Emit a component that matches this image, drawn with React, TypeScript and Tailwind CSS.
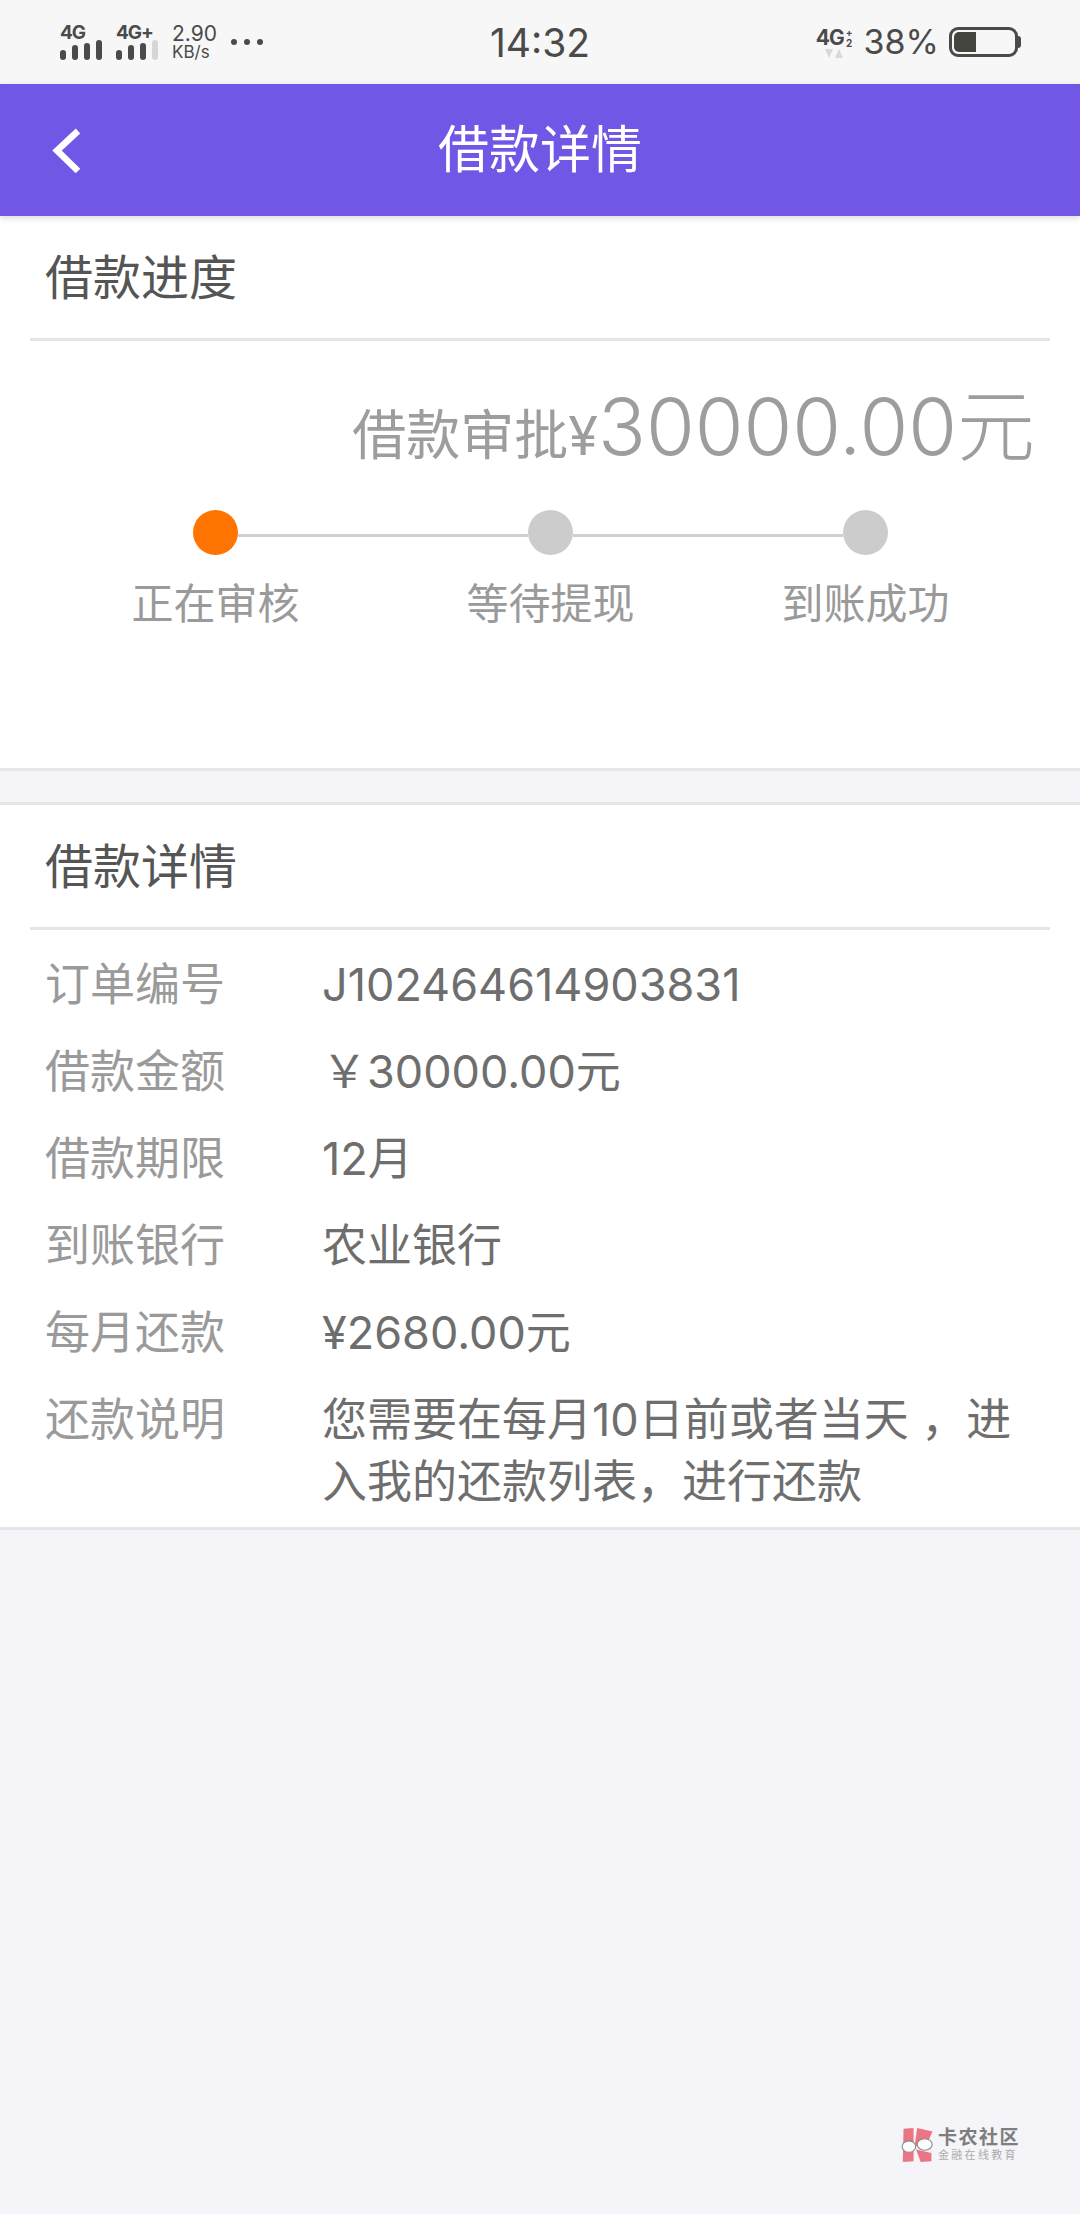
const base = "font-['Inter','Noto_Sans_CJK_SC',sans-serif]";

function SignalBars({ dim }: { dim?: boolean }) {
  const heights = ['h-[10px]', 'h-[15px]', 'h-[17px]', 'h-[20px]'];
  return (
    <div className="flex items-end gap-[6px]">
      {heights.map((h, i) => (
        <div
          key={h}
          className={`w-[6px] rounded-full ${h} ${dim && i === 3 ? 'bg-[#d6d6d6]' : 'bg-[#4a4a4a]'}`}
        />
      ))}
    </div>
  );
}

function Signal({ label, dim }: { label: string; dim?: boolean }) {
  return (
    <div className="w-[44px] flex flex-col items-start">
      <span className="text-[19px] leading-[16px] font-bold whitespace-nowrap tracking-[-1px] text-[#4a4a4a]">{label}</span>
      <div className="mt-[-1px]">
        <SignalBars dim={dim} />
      </div>
    </div>
  );
}

function StatusBar() {
  return (
    <div className="h-[84px] bg-[#f7f7f7] flex items-center justify-between text-[#4a4a4a]">
      <div className="w-[400px] flex items-center pl-[60px] gap-[12px]">
        <Signal label="4G" />
        <Signal label="4G+" dim />
        <div className="flex flex-col">
          <span className="text-[21px] leading-[20px]">2.90</span>
          <span className="text-[17px] leading-[16px]">KB/s</span>
        </div>
        <div className="flex gap-[7px] ml-[2px]">
          <div className="w-[6px] h-[6px] rounded-full bg-[#4a4a4a]" />
          <div className="w-[6px] h-[6px] rounded-full bg-[#4a4a4a]" />
          <div className="w-[6px] h-[6px] rounded-full bg-[#4a4a4a]" />
        </div>
      </div>
      <span className="text-[39px] leading-none">14:32</span>
      <div className="w-[400px] flex items-center justify-end pr-[59px]">
        <div className="flex flex-col items-center mr-[11px]">
          <div className="flex items-center">
            <span className="text-[21px] leading-[22px] font-bold tracking-[-1px]">4G</span>
            <div className="flex flex-col items-center ml-[2px] text-[10px] leading-[11px] font-bold">
              <span>+</span>
              <span>2</span>
            </div>
          </div>
          <svg width="18" height="9" viewBox="0 0 18 9">
            <path d="M0 0h8L4 9zM10 9l4-9 4 9z" fill="#d9d9d9" />
          </svg>
        </div>
        <span className="text-[34px] leading-none mr-[10px]">38%</span>
        <div className="flex items-center">
          <div className="w-[69px] h-[30px] rounded-[9px] border-[3px] border-[#4a4a4a] p-[2px]">
            <div className="w-[22px] h-full bg-[#44443e] rounded-l-[5px]" />
          </div>
          <div className="w-[3px] h-[12px] bg-[#4a4a4a] rounded-r-full" />
        </div>
      </div>
    </div>
  );
}

function Header() {
  return (
    <div className="relative z-10 h-[132px] pb-[2px] bg-[#7256e6] shadow-[0_2px_6px_rgba(0,0,0,0.15)] flex items-center justify-center">
      <svg className="absolute left-[50px] top-[42px]" width="32" height="50" viewBox="0 0 32 50" fill="none">
        <path d="M28 5 L7 24.5 L28 45" stroke="#fff" strokeWidth="6.5" />
      </svg>
      <span className="text-white text-[51px] leading-none">借款详情</span>
    </div>
  );
}

function SectionTitle({ children }: { children: string }) {
  return (
    <div className="mx-[30px] h-[125px] border-b-[3px] border-[#e5e5e5] pl-[15px] pt-[2px] flex items-center text-[48px] leading-none text-[#555555]">
      {children}
    </div>
  );
}

function Step({ label, active }: { label: string; active?: boolean }) {
  return (
    <div className="w-[45px] flex flex-col items-center shrink-0">
      <div className={`w-[45px] h-[45px] rounded-full ${active ? 'bg-[#ff7300]' : 'bg-[#cccccc]'}`} />
      <span className="mt-[27px] text-[42px] leading-[44px] whitespace-nowrap text-[#9a9a9a]">{label}</span>
    </div>
  );
}

const rows = [
  ['订单编号', 'J102464614903831'],
  ['借款金额', '￥30000.00元'],
  ['借款期限', '12月'],
  ['到账银行', '农业银行'],
  ['每月还款', '¥2680.00元'],
];

function DetailRow({ label, value }: { label: string; value: string }) {
  return (
    <div className="h-[87px] flex items-center text-[45px] leading-none">
      <span className="w-[277px] shrink-0 text-[#9a9a9a]">{label}</span>
      <span className="text-[#6e6e6e]">{value}</span>
    </div>
  );
}

export default function App() {
  return (
    <div className={`relative w-[1080px] min-h-[2214px] bg-[#f4f4f9] overflow-hidden ${base}`}>
      <StatusBar />
      <Header />

      {/* progress */}
      <div className="bg-white h-[555px] border-b-[3px] border-[#e6e6e6] flex flex-col">
        <SectionTitle>借款进度</SectionTitle>
        <div className="h-[169px] pt-[39px] pr-[45px] text-right text-[#9d9d9d] leading-[92px]">
          <span className="text-[54px]">借款审批¥</span>
          <span className="text-[79px] font-light">30000.00</span>
          <span className="text-[78px] font-light">元</span>
        </div>
        <div className="flex pl-[193px]">
          <Step label="正在审核" active />
          <div className="w-[290px] h-[3px] mt-[24px] bg-[#d0d0d0]" />
          <Step label="等待提现" />
          <div className="w-[270px] h-[3px] mt-[24px] bg-[#d0d0d0]" />
          <Step label="到账成功" />
        </div>
      </div>

      {/* details */}
      <div className="mt-[31px] bg-white border-y-[3px] border-[#e6e6e6]">
        <SectionTitle>借款详情</SectionTitle>
        <div className="pl-[45px] pr-[60px] pt-[11px] pb-[14px]">
          {rows.map(([label, value]) => (
            <DetailRow key={label} label={label} value={value} />
          ))}
          <div className="flex text-[45px] leading-[62px] pt-[13px]">
            <span className="w-[277px] shrink-0 text-[#9a9a9a]">还款说明</span>
            <span className="text-[#6e6e6e]">您需要在每月10日前或者当天 ，进入我的还款列表，进行还款</span>
          </div>
        </div>
      </div>

      {/* watermark */}
      <div className="absolute left-[901px] top-[2128px] flex items-center gap-[4px] opacity-85">
        <svg width="33" height="34" viewBox="0 0 92 95">
          <path d="M7 2 L35 0 L35 93 L5 95Z" fill="#e8616e" />
          <path d="M45 0 L88 10 L70 50 L38 50Z" fill="#e8616e" />
          <path d="M42 60 L85 70 L85 93 L55 95Z" fill="#e8616e" />
          <ellipse cx="22" cy="52" rx="19" ry="16" fill="#fff" stroke="#777" strokeWidth="3" />
          <ellipse cx="66" cy="46" rx="21" ry="16" fill="#fff" stroke="#777" strokeWidth="3" />
        </svg>
        <div className="flex flex-col">
          <span className="text-[19px] leading-[20px] font-bold text-[#6a6a6a] tracking-[1.5px]">卡农社区</span>
          <span className="text-[11px] leading-[14px] text-[#a0a0a0] tracking-[2.3px]">金融在线教育</span>
        </div>
      </div>
    </div>
  );
}
